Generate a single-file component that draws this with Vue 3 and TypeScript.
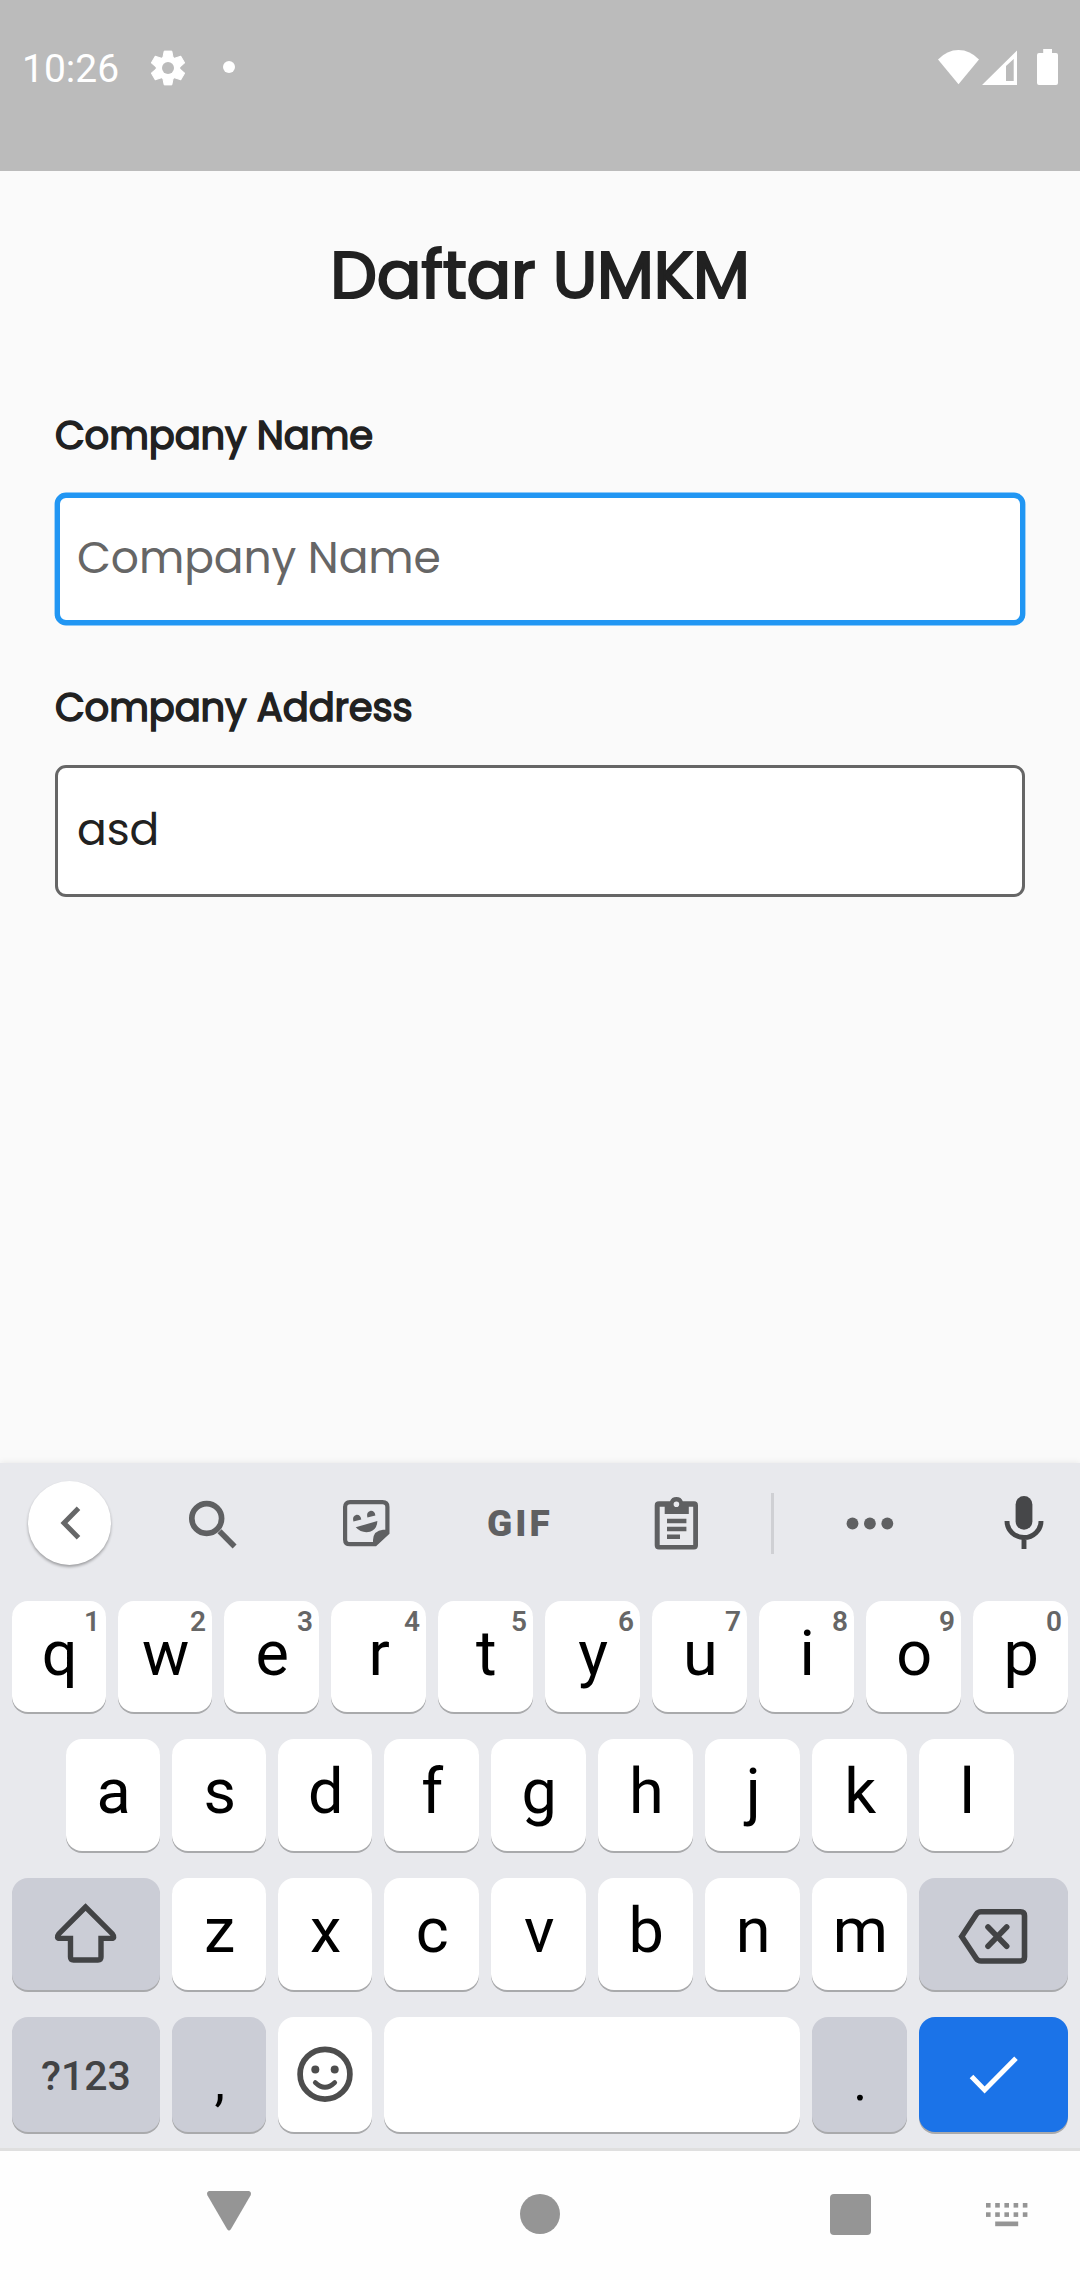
<script setup lang="ts">
interface LetterKey {
  label: string
  hint?: string
}

const topRow: LetterKey[] = 'qwertyuiop'
  .split('')
  .map((label, i) => ({ label, hint: String((i + 1) % 10) }))
const homeRow: LetterKey[] = 'asdfghjkl'.split('').map((label) => ({ label }))
const bottomRow: LetterKey[] = 'zxcvbnm'.split('').map((label) => ({ label }))

const gearTeeth: number[] = [0, 60, 120, 180, 240, 300]

const keyboardDots: { x: number; y: number }[] = [0, 9.3].flatMap((y) =>
  [0, 9.2, 18.4, 27.6, 36.8].map((x) => ({ x, y })),
)
</script>

<template>
  <div class="screen">
    <header class="status">
      <span class="clock">10:26</span>
      <svg class="gear" width="42" height="42" viewBox="-21 -21 42 42">
        <g fill="#fff" stroke="#fff" stroke-width="1" stroke-linejoin="round">
          <path
            v-for="angle in gearTeeth"
            :key="angle"
            d="M-3.800 -16.900H3.800L5.400 -9H-5.400Z"
            :transform="`rotate(${angle})`"
          />
          <circle r="11.800" />
        </g>
        <circle r="6" fill="#bbb" />
      </svg>
      <span class="dot"></span>
      <svg class="signals" width="124" height="40" viewBox="0 0 124 40" fill="#fff">
        <path d="M0 12.500Q9 3 20.500 3T41 12.500L20.500 37.200Z" />
        <path fill-rule="evenodd" d="M79 3.500V38H44ZM68 19V34H75.700V12Z" />
        <path
          d="M105.200 2h8.800v4h4q2 0 2 2v28q0 2-2 2h-17q-2 0-2-2V8q0-2 2-2h4.200z"
        />
      </svg>
    </header>

    <main class="form">
      <h1 class="title">Daftar UMKM</h1>
      <label class="label name-label">Company Name</label>
      <div class="field focused"><span class="placeholder">Company Name</span></div>
      <label class="label address-label">Company Address</label>
      <div class="field"><span class="value">asd</span></div>
    </main>

    <section class="keyboard">
      <div class="toolbar">
        <span class="back">
          <svg width="84" height="84" viewBox="0 0 84 84">
            <path d="M50.500 27.200L36 42L50.500 56.800" fill="none" stroke="#666768" stroke-width="5" />
          </svg>
        </span>
        <svg class="search" width="60" height="60" viewBox="0 0 60 60">
          <g fill="none" stroke="#5f6062">
            <circle cx="23.700" cy="25.500" r="14.900" stroke-width="5.700" />
            <path d="M36.500 38.300L51.600 53.400" stroke-width="5.600" />
          </g>
        </svg>
        <svg class="sticker" width="60" height="60" viewBox="0 0 60 60" fill="#5f6062">
          <path
            d="M14 9.200H46.500Q51.400 9.200 51.400 14V39.800L39.200 51.200H14Q9.100 51.200 9.100 46.400V14Q9.100 9.200 14 9.200Z"
            fill="none"
            stroke="#5f6062"
            stroke-width="4.200"
          />
          <path d="M37 52.500V47Q37.500 37.500 47 36.800H52V40.500L39.500 52.500Z" />
          <path d="M17.400 28.600Q15.900 23 20.500 21.800Q24.500 21.500 25.300 26.500Z" />
          <path d="M31.400 24.600Q30 19 34.600 17.800Q38.600 17.500 39.400 22.400Z" />
          <path d="M19.700 34.300L41.400 28Q41 36.500 34 38.800Q25.500 40.500 19.700 34.300Z" />
        </svg>
        <span class="gif">GIF</span>
        <svg class="clipboard" width="60" height="60" viewBox="0 0 60 60" fill="#5f6062">
          <path
            fill-rule="evenodd"
            d="M13 8.300H24Q25.500 4 30.400 4T36.800 8.300H48Q52 8.300 52 12.500V52.300Q52 56.500 48 56.500H13Q8.700 56.500 8.700 52.300V12.500Q8.700 8.300 13 8.300ZM13.700 13.700V52H47.200V13.700H42.800V21H18.700V13.700ZM30.400 8.500A2.800 2.800 0 1 0 30.400 14.100A2.800 2.800 0 1 0 30.400 8.500Z"
          />
          <path d="M21 25.700h19.400v4.500H21zM21 33.700h19.400v4.500H21zM21 41.400h13v4.600H21z" />
        </svg>
        <span class="divider"></span>
        <svg class="more" width="60" height="60" viewBox="0 0 60 60" fill="#5f6062">
          <circle cx="12.500" cy="30.500" r="5.900" />
          <circle cx="29.900" cy="30.500" r="5.900" />
          <circle cx="47.300" cy="30.500" r="5.900" />
        </svg>
        <svg class="mic" width="60" height="60" viewBox="0 0 60 60">
          <rect x="21.600" y="3" width="16.800" height="33.700" rx="8.400" fill="#464749" />
          <path
            d="M13 28a17 16.500 0 0 0 34 0M30 44V56"
            fill="none"
            stroke="#464749"
            stroke-width="4.900"
          />
        </svg>
      </div>

      <div class="row first">
        <span v-for="(key, i) in topRow" :key="key.label" class="key" :class="{ narrow: i < 2 }">
          {{ key.label }}<small class="hint">{{ key.hint }}</small>
        </span>
      </div>
      <div class="row home">
        <span v-for="(key, i) in homeRow" :key="key.label" class="key" :class="{ narrow: i < 3 }">{{
          key.label
        }}</span>
      </div>
      <div class="row">
        <span class="key shift grey icon">
          <svg width="70" height="70" viewBox="0 0 70 70">
            <path
              d="M34.600 8L8 34.700Q4.500 39.200 9 39.400H19.500V58Q19.500 61 22.500 61H47Q50 61 50 58V39.400H60.200Q64.700 39.200 61.200 34.700Z"
              fill="none"
              stroke="#424345"
              stroke-width="5.400"
            />
          </svg>
        </span>
        <span v-for="(key, i) in bottomRow" :key="key.label" class="key" :class="{ narrow: i < 2 }">{{
          key.label
        }}</span>
        <span class="key wide grey icon">
          <svg width="80" height="70" viewBox="0 0 80 70" fill="none" stroke="#424345">
            <path
              d="M7.700 37.500L22.300 15.200Q24 12.700 27 12.700H66.500Q70.500 12.700 70.500 16.700V58Q70.500 62 66.500 62H27Q24 62 22.300 59.500Z"
              stroke-width="5.600"
            />
            <path
              d="M34 28L52.700 47.200M52.700 28L34 47.200"
              stroke-width="5.600"
              stroke-linecap="round"
            />
          </svg>
        </span>
      </div>
      <div class="row last">
        <span class="key shift grey symbols">?123</span>
        <span class="key narrow grey mark">,</span>
        <span class="key narrow icon">
          <svg width="60" height="60" viewBox="-30 -30 60 60" fill="none" stroke="#4d4d4d">
            <circle cx="0" cy="-.800" r="24.900" stroke-width="5.700" />
            <circle cx="-9.700" cy="-5.500" r="4" fill="#4d4d4d" stroke="none" />
            <circle cx="9.700" cy="-5.500" r="4" fill="#4d4d4d" stroke="none" />
            <path d="M-9.800 7.500Q0 17 9.800 7.500" stroke-width="4.600" stroke-linecap="round" />
          </svg>
        </span>
        <span class="key space"></span>
        <span class="key grey mark">.</span>
        <span class="key wide enter icon">
          <svg width="60" height="60" viewBox="0 0 60 60">
            <path
              d="M7.500 31.500L20.600 45L52 13.200"
              fill="none"
              stroke="#fff"
              stroke-width="5"
            />
          </svg>
        </span>
      </div>
    </section>

    <nav class="navbar">
      <svg class="nav-back" width="46" height="42" viewBox="0 0 46 42">
        <path
          d="M3 0H43Q46 1 44.500 4.500L25 38Q23 41 21 38L1.500 4.500Q0 1 3 0Z"
          fill="#959595"
        />
      </svg>
      <span class="nav-home"></span>
      <span class="nav-recent"></span>
      <svg class="nav-ime" width="42" height="24" viewBox="0 0 42 24" fill="#959595">
        <rect v-for="(d, i) in keyboardDots" :key="i" :x="d.x" :y="d.y" width="4.600" height="4.600" />
        <rect x="9.200" y="18.500" width="23" height="4.700" />
      </svg>
    </nav>
  </div>
</template>

<style>
body {
  margin: 0;
}
</style>

<style scoped>
.screen {
  width: 1080px;
  height: 2280px;
  display: flex;
  flex-direction: column;
  overflow: hidden;
  background: #fafafa;
  font-family: Roboto, "Liberation Sans", sans-serif;
}
.screen * {
  box-sizing: border-box;
}
svg {
  display: block;
  flex: none;
}

.status {
  flex: none;
  height: 171px;
  padding: 46px 18px 0 22px;
  display: flex;
  align-items: flex-start;
  background: #bbb;
  color: #fff;
}
.clock {
  width: 125px;
  font-size: 39px;
  line-height: 47px;
}
.gear {
  margin-top: .5px;
}
.dot {
  width: 12px;
  height: 12px;
  margin: 15px 0 0 34px;
  border-radius: 50%;
  background: #fff;
}
.signals {
  margin: 1px 0 0 auto;
}

.form {
  flex: none;
  height: 1292px;
  padding: 64px 55px 0;
  display: flex;
  flex-direction: column;
  color: #212121;
  font-family: Poppins, Inter, "Open Sans", sans-serif;
}
.title {
  margin: 0;
  font-size: 66px;
  line-height: 80px;
  font-weight: 400;
  letter-spacing: -.2px;
  -webkit-text-stroke: 2.200px #212121;
  text-align: center;
}
.label {
  font-size: 38.500px;
  line-height: 40px;
  font-weight: 400;
  letter-spacing: -.1px;
  -webkit-text-stroke: 1.500px #212121;
}
.name-label {
  margin: 101px 0 37px;
}
.address-label {
  margin: 63px 0 37px;
}
.field {
  height: 132px;
  padding: 0 0 3px 19px;
  display: flex;
  align-items: center;
  border: 3px solid #666;
  border-radius: 11px;
  background: #fff;
  font-size: 44px;
  letter-spacing: -.1px;
}
.focused {
  padding-left: 17px;
  border: 5px solid #2196f3;
  box-shadow: 0 0 0 .4px #2196f3;
}
.placeholder {
  color: #666;
}

.keyboard {
  flex: none;
  height: 688px;
  display: flex;
  flex-direction: column;
  border-bottom: 3px solid #dfdfdf;
  background: #e8e9ed;
  box-shadow: 0 0 7px rgba(0, 0, 0, .09);
}
.toolbar {
  flex: none;
  height: 120px;
  padding-left: 27.500px;
  display: flex;
  align-items: center;
}
.back {
  width: 83.500px;
  height: 83.500px;
  border-radius: 50%;
  background: #fff;
  box-shadow: 0 2px 3px rgba(0, 0, 0, .32);
}
.search {
  margin-left: 71.500px;
}
.sticker {
  margin-left: 93px;
}
.gif {
  width: 66px;
  margin-left: 91.500px;
  color: #5f6062;
  font-size: 37px;
  font-weight: 900;
  letter-spacing: 3px;
}
.clipboard {
  margin-left: 93px;
}
.divider {
  width: 3px;
  height: 61px;
  margin: 1px 0 0 65px;
  background: #cfd0d4;
}
.more {
  margin-left: 65.500px;
}
.mic {
  margin-left: 94.500px;
}

.row {
  flex: none;
  height: 112px;
  margin-bottom: 27px;
  padding: 0 12px;
  display: flex;
  gap: 12px;
}
.first {
  height: 111px;
  margin-top: 18px;
}
.home {
  padding: 0 66px;
}
.last {
  height: 115px;
  margin-bottom: 0;
}
.key {
  position: relative;
  flex: 0 0 95px;
  padding: 0 0 7px 1.500px;
  display: flex;
  align-items: center;
  justify-content: center;
  border-radius: 16px;
  background: #fff;
  box-shadow: 0 2px 0 #a9aaac;
  color: #000;
  font-size: 63px;
  line-height: 1;
}
.narrow {
  flex-basis: 94px;
}
.hint {
  position: absolute;
  top: 7px;
  right: 6px;
  color: #666;
  font-size: 28px;
  line-height: 28px;
  font-weight: 600;
}
.icon {
  padding: 0;
}
.shift {
  flex-basis: 148px;
}
.wide {
  flex-basis: 149px;
}
.space {
  flex-basis: 416px;
}
.grey {
  background: #cbcdd6;
}
.symbols {
  padding: 3px 0 0;
  color: #424345;
  font-size: 41px;
  font-weight: 500;
}
.mark {
  padding: 15px 0 0 1.500px;
  font-size: 53px;
}
.enter {
  background: #1b73e8;
}

.navbar {
  flex: none;
  height: 129px;
  padding-left: 205.500px;
  display: flex;
  align-items: flex-start;
  background: #fefefe;
}
.nav-back {
  margin-top: 40px;
}
.nav-home {
  width: 40px;
  height: 40px;
  margin: 43px 0 0 268.500px;
  border-radius: 50%;
  background: #959595;
}
.nav-recent {
  width: 41px;
  height: 41px;
  margin: 43px 0 0 270px;
  border-radius: 4px;
  background: #959595;
}
.nav-ime {
  margin: 52px 0 0 115px;
}
</style>
